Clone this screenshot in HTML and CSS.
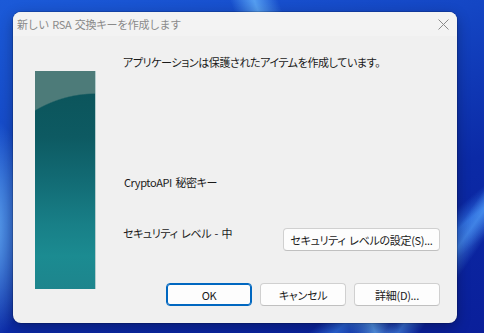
FILE: index.html
```html
<!DOCTYPE html>
<html lang="ja">
<head>
    <meta charset="UTF-8">
    <title>新しい RSA 交換キーを作成します</title>
    <link rel="stylesheet" href="styles.css">
</head>
<body>
    <div class="desktop">
        <div class="dialog">
            <!-- Title bar -->
            <div class="title-bar">
                <span class="title">新しい RSA 交換キーを作成します</span>
                <span class="close-btn">
                    <svg width="11" height="11" viewBox="0 0 11 11">
                        <path d="M0.5 0.5 L10.5 10.5 M10.5 0.5 L0.5 10.5" stroke="#8a8a8a" stroke-width="1" fill="none"/>
                    </svg>
                </span>
            </div>

            <div class="dialog-body">
                <div class="side-art"></div>

                <div class="content">
                    <p class="message">アプリケーションは保護されたアイテムを作成しています。</p>
                    <p class="key-name">CryptoAPI 秘密キー</p>

                    <div class="security-row">
                        <span class="level">セキュリティ レベル - 中</span>
                        <button class="btn btn-wide">セキュリティ レベルの設定(S)...</button>
                    </div>

                    <div class="button-row">
                        <button class="btn btn-default">OK</button>
                        <button class="btn">キャンセル</button>
                        <button class="btn">詳細(D)...</button>
                    </div>
                </div>
            </div>
        </div>
    </div>
</body>
</html>
```

FILE: styles.css
```css
body {
    margin: 0;
    font-family: "Noto Sans CJK JP", "Noto Sans", sans-serif;
    font-size: 11px;
    letter-spacing: -0.4px;
    word-spacing: 1.5px;
    color: #1a1a1a;
}

.desktop {
    width: 484px;
    height: 333px;
    overflow: hidden;
    padding: 12px 0 0 13px;
    box-sizing: border-box;
    background:
        linear-gradient(125deg, transparent 0 86%, rgba(90, 170, 255, 0.55) 88%, transparent 91%),
        linear-gradient(140deg, transparent 0 80%, rgba(60, 140, 250, 0.6) 83%, transparent 87%),
        linear-gradient(70deg, transparent 0 58%, rgba(110, 190, 255, 0.7) 62%, transparent 66%),
        radial-gradient(ellipse 60px 160px at -10px 230px, rgba(120, 200, 255, 0.8), transparent 70%),
        linear-gradient(160deg, #1b5ad8 0%, #1446c4 35%, #0b2aa6 65%, #0a1f9a 100%);
}

.dialog {
    width: 444px;
    height: 311px;
    background: #f0f0f0;
    border-radius: 8px;
    overflow: hidden;
    box-shadow: 0 0 0 1px rgba(0, 0, 0, 0.15), 0 4px 14px rgba(0, 0, 0, 0.3);
    display: flex;
    flex-direction: column;
}

.title-bar {
    flex-shrink: 0;
    height: 24px;
    background: #f3f3f3;
    display: flex;
    align-items: center;
    justify-content: space-between;
    padding: 0 8px 0 4px;
}

.title {
    color: #8a8a8a;
    font-size: 11px;
}

.close-btn {
    display: flex;
    width: 11px;
    height: 11px;
}

.dialog-body {
    flex: 1;
    min-height: 0;
    display: flex;
    align-items: flex-start;
    padding: 18px 17px 0 22px;
}

.side-art {
    flex-shrink: 0;
    margin-top: 17px;
    width: 61px;
    height: 218px;
    border-right: 1px solid #b4cccc;
    box-sizing: border-box;
    background:
        radial-gradient(ellipse 150px 200px at 60px 222px, transparent 99.3%, #4d7b79 100%),
        linear-gradient(180deg, #0b5258 0%, #0d5a62 30%, #126b74 50%, #187f87 70%, #1b8b91 85%, #1e858d 100%);
}

.content {
    flex: 1;
    margin-left: 27px;
    display: flex;
    flex-direction: column;
}

.message,
.key-name {
    margin: 0;
    line-height: 16px;
    font-feature-settings: "palt";
    white-space: nowrap;
}

.key-name {
    margin-top: 104px;
    margin-left: 1px;
}

.security-row {
    margin-top: 35px;
    display: flex;
    justify-content: space-between;
    align-items: flex-start;
    line-height: 16px;
    font-feature-settings: "palt";
}

.btn {
    font-family: inherit;
    font-size: 11px;
    letter-spacing: -0.3px;
    word-spacing: 1.5px;
    color: #1a1a1a;
    background: #fdfdfd;
    border: 1px solid #d0d0d0;
    border-bottom-color: #c0c0c0;
    border-radius: 4px;
    height: 23px;
    width: 86px;
    padding: 0;
    white-space: nowrap;
    font-feature-settings: "palt";
}

.btn-wide {
    width: 157px;
    margin-top: 3px;
}

.btn-default {
    border: 1px solid #0067c0;
    box-shadow: inset 0 0 0 1px #0067c0;
}

.button-row {
    margin-top: 32px;
    display: flex;
    justify-content: flex-end;
    gap: 8px;
}
```
